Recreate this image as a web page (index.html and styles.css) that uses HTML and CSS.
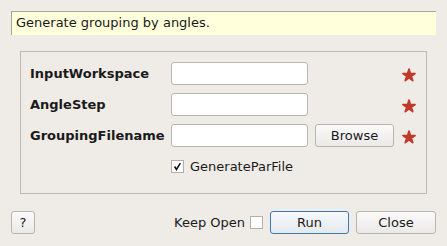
FILE: index.html
```html
<!DOCTYPE html>
<html>
<head>
<title>Generate grouping by angles</title>
<link rel="stylesheet" href="styles.css">
</head>
<body>
<div class="dialog">
<div class="description">Generate grouping by angles.</div>

<div class="group">
<div class="form">
<label class="prop-name">InputWorkspace</label>
<input class="prop-value" type="text">
<span></span>
<svg class="required" viewBox="0 0 16 16"><polygon points="8,2.2 9.3,6.6 14,6.55 10.2,9.3 11.7,13.6 8,10.8 4.3,13.6 5.8,9.3 2,6.55 6.7,6.6"/></svg>

<label class="prop-name">AngleStep</label>
<input class="prop-value" type="text">
<span></span>
<svg class="required" viewBox="0 0 16 16"><polygon points="8,2.2 9.3,6.6 14,6.55 10.2,9.3 11.7,13.6 8,10.8 4.3,13.6 5.8,9.3 2,6.55 6.7,6.6"/></svg>

<label class="prop-name">GroupingFilename</label>
<input class="prop-value" type="text">
<button class="btn">Browse</button>
<svg class="required" viewBox="0 0 16 16"><polygon points="8,2.2 9.3,6.6 14,6.55 10.2,9.3 11.7,13.6 8,10.8 4.3,13.6 5.8,9.3 2,6.55 6.7,6.6"/></svg>

<span></span>
<label class="check-row"><span class="check"><svg viewBox="0 0 13 13"><path d="M3 6.5 L5.3 10 L9.8 2.5"/></svg></span>GenerateParFile</label>
</div>
</div>

<div class="buttons">
<button class="btn help">?</button>
<span class="spacer"></span>
<label class="keep">Keep Open <span class="check"></span></label>
<button class="btn run">Run</button>
<button class="btn">Close</button>
</div>
</div>
</body>
</html>
```

FILE: styles.css
```css
/* Algorithm dialog */

body
{ margin: 0;
background-color: #efebe7;
font-family: "DejaVu Sans", sans-serif;
font-size: 13px;
color: #1a1a1a;
}

div.dialog
{ padding: 11px;
}

div.description
{ height: 24px;
box-sizing: border-box;
padding-left: 4px;
line-height: 22px;
background-color: #ffffdc;
border-top: 1px solid #a8a49f;
border-left: 1px solid #a8a49f;
}

div.group
{ margin: 16px 9px 0 9px;
border: 1px solid #bdb9b4;
padding: 10px 9px 15px 9px;
}

div.form
{ display: grid;
grid-template-columns: 134px 137px 79px 16px;
grid-auto-rows: 23px;
column-gap: 7px;
row-gap: 8px;
align-items: center;
}

label.prop-name
{ font-weight: bold;
}

input.prop-value
{ height: 23px;
box-sizing: border-box;
margin: 0;
border: 1px solid #b9b5b0;
border-radius: 3px;
background: #ffffff;
}

svg.required
{ width: 16px;
height: 16px;
margin-top: 3px;
}

svg.required polygon
{ fill: #c0392b;
stroke: #c0392b;
stroke-width: 1.8;
stroke-linejoin: round;
}

label.check-row
{ grid-column: 2 / 5;
display: flex;
align-items: center;
gap: 6px;
}

span.check
{ display: inline-block;
width: 13px;
height: 13px;
box-sizing: border-box;
border: 1px solid #b3afaa;
background: #ffffff;
}

span.check svg
{ display: block;
width: 11px;
height: 11px;
}

span.check path
{ fill: none;
stroke: #111111;
stroke-width: 1.8;
}

button.btn
{ height: 23px;
margin: 0;
padding: 0;
font-family: "DejaVu Sans", sans-serif;
font-size: 13px;
color: #1a1a1a;
border: 1px solid #b8b4af;
border-radius: 3px;
background: linear-gradient(#fbfafa, #eceae8);
}

div.buttons
{ display: flex;
align-items: center;
margin-top: 17px;
}

button.help
{ width: 24px;
}

span.spacer
{ flex: 1;
}

label.keep
{ display: flex;
align-items: center;
gap: 5px;
margin-right: 7px;
}

button.run
{ width: 79px;
margin-right: 7px;
border-color: #3b7bb0;
background: linear-gradient(#f7f9fb, #e4e9ee);
}

div.buttons button.btn:last-child
{ width: 80px;
}
```
